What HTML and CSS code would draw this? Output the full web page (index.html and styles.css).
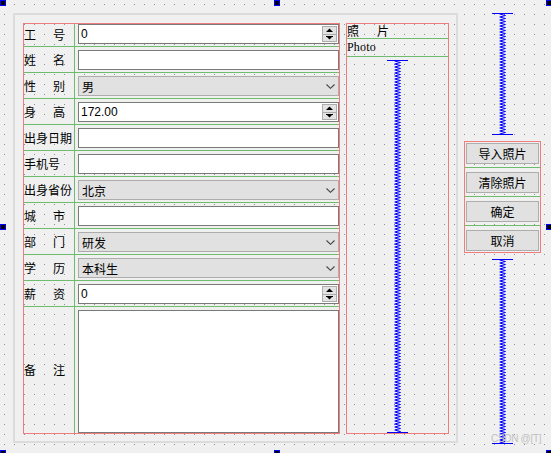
FILE: index.html
```html
<!DOCTYPE html>
<html lang="zh">
<head>
<meta charset="utf-8">
<title>Form</title>
<link rel="stylesheet" href="styles.css">
</head>
<body>
<div class="canvas">
  <div class="frame">
    <div class="form">
      <div class="row first">
        <div class="lbl two"><span>工</span><span>号</span></div>
        <div class="field"><div class="spin"><span class="val">0</span><div class="spin-btns"><span class="sb up"><svg width="7" height="4" viewBox="0 0 7 4"><path d="M0 4 L3.5 0.5 L7 4 Z" fill="#000"/></svg></span><span class="sb down"><svg width="7" height="4" viewBox="0 0 7 4"><path d="M0 0 H7 V1 H0 Z M1 1 L3.5 3.6 L6 1 Z" fill="#000"/></svg></span></div></div></div>
      </div>
      <div class="row">
        <div class="lbl two"><span>姓</span><span>名</span></div>
        <div class="field"><div class="edit"></div></div>
      </div>
      <div class="row">
        <div class="lbl two"><span>性</span><span>别</span></div>
        <div class="field"><div class="combo"><span>男</span><svg width="9" height="5" viewBox="0 0 9 5"><path d="M0.5 0.5 L4.5 4.3 L8.5 0.5" fill="none" stroke="#444" stroke-width="1.1"/></svg></div></div>
      </div>
      <div class="row">
        <div class="lbl two"><span>身</span><span>高</span></div>
        <div class="field"><div class="spin"><span class="val">172.00</span><div class="spin-btns"><span class="sb up"><svg width="7" height="4" viewBox="0 0 7 4"><path d="M0 4 L3.5 0.5 L7 4 Z" fill="#000"/></svg></span><span class="sb down"><svg width="7" height="4" viewBox="0 0 7 4"><path d="M0 0 H7 V1 H0 Z M1 1 L3.5 3.6 L6 1 Z" fill="#000"/></svg></span></div></div></div>
      </div>
      <div class="row">
        <div class="lbl"><span>出身日期</span></div>
        <div class="field"><div class="edit"></div></div>
      </div>
      <div class="row">
        <div class="lbl"><span>手机号</span></div>
        <div class="field"><div class="edit"></div></div>
      </div>
      <div class="row">
        <div class="lbl"><span>出身省份</span></div>
        <div class="field"><div class="combo"><span>北京</span><svg width="9" height="5" viewBox="0 0 9 5"><path d="M0.5 0.5 L4.5 4.3 L8.5 0.5" fill="none" stroke="#444" stroke-width="1.1"/></svg></div></div>
      </div>
      <div class="row">
        <div class="lbl two"><span>城</span><span>市</span></div>
        <div class="field"><div class="edit"></div></div>
      </div>
      <div class="row">
        <div class="lbl two"><span>部</span><span>门</span></div>
        <div class="field"><div class="combo"><span>研发</span><svg width="9" height="5" viewBox="0 0 9 5"><path d="M0.5 0.5 L4.5 4.3 L8.5 0.5" fill="none" stroke="#444" stroke-width="1.1"/></svg></div></div>
      </div>
      <div class="row">
        <div class="lbl two"><span>学</span><span>历</span></div>
        <div class="field"><div class="combo"><span>本科生</span><svg width="9" height="5" viewBox="0 0 9 5"><path d="M0.5 0.5 L4.5 4.3 L8.5 0.5" fill="none" stroke="#444" stroke-width="1.1"/></svg></div></div>
      </div>
      <div class="row">
        <div class="lbl two"><span>薪</span><span>资</span></div>
        <div class="field"><div class="spin"><span class="val">0</span><div class="spin-btns"><span class="sb up"><svg width="7" height="4" viewBox="0 0 7 4"><path d="M0 4 L3.5 0.5 L7 4 Z" fill="#000"/></svg></span><span class="sb down"><svg width="7" height="4" viewBox="0 0 7 4"><path d="M0 0 H7 V1 H0 Z M1 1 L3.5 3.6 L6 1 Z" fill="#000"/></svg></span></div></div></div>
      </div>
      <div class="row last">
        <div class="lbl two"><span>备</span><span>注</span></div>
        <div class="field"><div class="textedit"></div></div>
      </div>
    </div>
    <div class="photo">
      <div class="prow pr1"><span>照</span><span>片</span></div>
      <div class="prow pr2">Photo</div>
      <div class="vspacer pv">
        <div class="bar"></div>
        <svg class="spring"><defs><pattern id="zz1" width="7" height="3" patternUnits="userSpaceOnUse"><path d="M0.5 0 L6.5 1.5 L0.5 3" fill="none" stroke="#0000ff" stroke-width="1"/></pattern></defs><rect width="100%" height="100%" fill="url(#zz1)"/></svg>
        <div class="bar"></div>
      </div>
    </div>
  </div>
  <div class="side">
    <div class="vspacer s1">
      <div class="bar"></div>
      <svg class="spring"><defs><pattern id="zz2" width="7" height="3" patternUnits="userSpaceOnUse"><path d="M0.5 0 L6.5 1.5 L0.5 3" fill="none" stroke="#0000ff" stroke-width="1"/></pattern></defs><rect width="100%" height="100%" fill="url(#zz2)"/></svg>
      <div class="bar"></div>
    </div>
    <div class="btnbox">
      <button class="btn">导入照片</button>
      <div class="sep"></div>
      <button class="btn">清除照片</button>
      <div class="sep"></div>
      <button class="btn">确定</button>
      <div class="sep"></div>
      <button class="btn">取消</button>
    </div>
    <div class="vspacer s2">
      <div class="bar"></div>
      <svg class="spring"><defs><pattern id="zz3" width="7" height="3" patternUnits="userSpaceOnUse"><path d="M0.5 0 L6.5 1.5 L0.5 3" fill="none" stroke="#0000ff" stroke-width="1"/></pattern></defs><rect width="100%" height="100%" fill="url(#zz3)"/></svg>
      <div class="bar"></div>
    </div>
  </div>
</div>
<div class="watermark">CSDN @[T]</div>
<div class="handle h-l h-t"></div>
<div class="handle h-m h-t"></div>
<div class="handle h-r h-t"></div>
<div class="handle h-l h-c"></div>
<div class="handle h-r h-c"></div>
<div class="handle h-l h-b"></div>
<div class="handle h-m h-b"></div>
<div class="handle h-r h-b"></div>
</body>
</html>
```

FILE: styles.css
```css
:root {
  --red: #ef7d7d;
  --green: #6dbd6d;
}
html, body {
  margin: 0;
  padding: 0;
  width: 100%;
  height: 100%;
  overflow: hidden;
}
body {
  position: relative;
  background-color: #f0f0f0;
  background-image: conic-gradient(at 1px 1px, transparent 75%, #8e8e8e 0);
  background-size: 10px 10px;
  background-position: 4px 4px;
  font-family: "Liberation Sans", "Noto Sans CJK SC", sans-serif;
  font-size: 12px;
  color: #000;
}
.canvas {
  display: flex;
  align-items: flex-start;
  padding: 13px 0 0 13px;
}
.frame {
  width: 445px;
  height: 430px;
  box-sizing: border-box;
  border: 2px solid #dcdcdc;
  padding: 8px 7px 7px 8px;
  display: flex;
  gap: 6px;
}
.form {
  width: 317px;
  height: 411px;
  box-sizing: border-box;
  border: 1px solid var(--red);
  display: flex;
  flex-direction: column;
}
.row {
  display: flex;
  flex: none;
  height: 26px;
  box-sizing: border-box;
  border-bottom: 1px solid var(--green);
}
.row.first { height: 23px; }
.row.last {
  flex: 1;
  height: auto;
  border-bottom: 0;
}
.lbl {
  width: 51px;
  flex: none;
  box-sizing: border-box;
  border-right: 1px solid var(--green);
  display: flex;
  align-items: center;
  white-space: nowrap;
  font-family: "Noto Sans CJK SC", sans-serif;
  font-size: 12px;
  line-height: 14px;
}
.lbl.two span + span { margin-left: 17px; }
.field {
  flex: 1;
  min-width: 0;
  padding: 3px 0 0 3px;
}
.row.first .field { padding-top: 0; }
.edit, .spin, .combo {
  height: 20px;
  box-sizing: border-box;
  display: flex;
  align-items: center;
}
.edit, .spin {
  background: #fff;
  border: 1px solid #7a7a7a;
}
.spin { padding-left: 2px; }
.spin .val { flex: 1; }
.spin-btns {
  width: 15px;
  height: 16px;
  box-sizing: border-box;
  border: 1px solid #adadad;
  background: #e3e3e3;
  display: flex;
  flex-direction: column;
  margin-right: 1px;
}
.sb {
  flex: 1;
  display: flex;
  align-items: center;
  justify-content: center;
}
.sb.up { border-bottom: 1px solid #adadad; }
.sb svg { display: block; }
.combo {
  background: #e1e1e1;
  border: 1px solid #adadad;
  padding: 0 3px 0 3px;
  justify-content: space-between;
  font-family: "Noto Sans CJK SC", sans-serif;
}
.combo svg { display: block; }
.textedit {
  height: 100%;
  box-sizing: border-box;
  background: #fff;
  border: 1px solid #7a7a7a;
}
.photo {
  width: 103px;
  height: 411px;
  box-sizing: border-box;
  border: 1px solid var(--red);
  display: flex;
  flex-direction: column;
}
.prow {
  flex: none;
  box-sizing: border-box;
  border-bottom: 1px solid var(--green);
  display: flex;
  align-items: center;
}
.pr1 {
  height: 15px;
  font-family: "Noto Sans CJK SC", sans-serif;
  line-height: 14px;
}
.pr1 span + span { margin-left: 18px; }
.pr2 {
  height: 18px;
  font-family: "Liberation Serif", "Times New Roman", serif;
  font-size: 12px;
  letter-spacing: 0.2px;
}
.vspacer {
  display: flex;
  flex-direction: column;
  align-items: center;
}
.vspacer .bar {
  width: 21px;
  height: 1px;
  flex: none;
  background: #0000ff;
}
.vspacer .spring {
  display: block;
  flex: 1;
  width: 7px;
  min-height: 0;
}
.pv {
  flex: 1;
  margin-top: 3px;
}
.side {
  width: 77px;
  margin-left: 6px;
  display: flex;
  flex-direction: column;
}
.s1 { height: 122px; }
.s2 {
  height: 185px;
  margin-top: 6px;
}
.btnbox {
  margin-top: 6px;
  height: 112px;
  box-sizing: border-box;
  border: 1px solid var(--red);
  padding: 1px;
  display: flex;
  flex-direction: column;
}
.btn {
  display: block;
  height: 21px;
  width: 100%;
  margin: 0;
  padding: 0;
  box-sizing: border-box;
  border: 1px solid #adadad;
  background: #e1e1e1;
  font-family: "Noto Sans CJK SC", sans-serif;
  font-size: 12px;
  line-height: 19px;
  color: #000;
  text-align: center;
}
.sep {
  height: 1px;
  margin: 3px -1px 4px;
  background: var(--green);
  flex: none;
}
.watermark {
  position: absolute;
  left: 491px;
  top: 433px;
  white-space: nowrap;
  font-family: "Liberation Sans", sans-serif;
  font-size: 10px;
  letter-spacing: -0.3px;
  line-height: 12px;
  color: #c2c2c2;
}
.handle {
  position: absolute;
  width: 6px;
  height: 6px;
  box-sizing: border-box;
  border: 1px solid #0000ff;
  background: #000;
}
.h-l { left: 0; }
.h-m { left: 274px; }
.h-r { left: 546px; }
.h-t { top: 0; }
.h-c { top: 224px; }
.h-b { top: 450px; }
```
